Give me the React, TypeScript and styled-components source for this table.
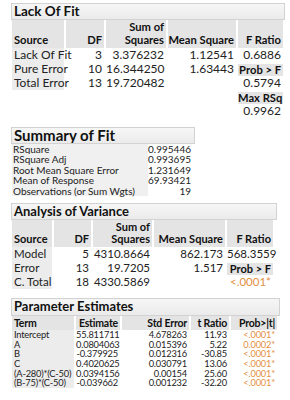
import * as React from 'react';
import styled, { createGlobalStyle } from 'styled-components';

type Kind = 'label' | 'num' | 'sub' | 'p' | 'blank';
type Cell = { t: string, k: Kind };

const L = (t: string): Cell => ({ t, k: 'label' });
const N = (t: string): Cell => ({ t, k: 'num' });
const S = (t: string): Cell => ({ t, k: 'sub' });
const P = (t: string): Cell => ({ t, k: 'p' });
const B: Cell = { t: '', k: 'blank' };

const lackOfFit = {
  heads: ['Source', 'DF', 'Sum of\nSquares', 'Mean Square', 'F Ratio'],
  rows: [
    [L('Lack Of Fit'), N('3'), N('3.376232'), N('1.12541'), N('0.6886')],
    [L('Pure Error'), N('10'), N('16.344250'), N('1.63443'), S('Prob > F')],
    [L('Total Error'), N('13'), N('19.720482'), B, N('0.5794')],
    [B, B, B, B, S('Max RSq')],
    [B, B, B, B, N('0.9962')],
  ],
};

const anova = {
  heads: ['Source', 'DF', 'Sum of\nSquares', 'Mean Square', 'F Ratio'],
  rows: [
    [L('Model'), N('5'), N('4310.8664'), N('862.173'), N('568.3559')],
    [L('Error'), N('13'), N('19.7205'), N('1.517'), S('Prob > F')],
    [L('C. Total'), N('18'), N('4330.5869'), B, P('<.0001*')],
  ],
};

const estimates = {
  heads: ['Term', 'Estimate', 'Std Error', 't Ratio', 'Prob>|t|'],
  rows: [
    [L('Intercept'), N('55.811711'), N('4.678263'), N('11.93'), P('<.0001*')],
    [L('A'), N('0.0804063'), N('0.015396'), N('5.22'), P('0.0002*')],
    [L('B'), N('-0.379925'), N('0.012316'), N('-30.85'), P('<.0001*')],
    [L('C'), N('0.4020625'), N('0.030791'), N('13.06'), P('<.0001*')],
    [L('(A-280)*(C-50)'), N('0.0394156'), N('0.00154'), N('25.60'), P('<.0001*')],
    [L('(B-75)*(C-50)'), N('-0.039662'), N('0.001232'), N('-32.20'), P('<.0001*')],
  ],
};

const summary = [
  ['RSquare', '0.995446'],
  ['RSquare Adj', '0.993695'],
  ['Root Mean Square Error', '1.231649'],
  ['Mean of Response', '69.93421'],
  ['Observations (or Sum Wgts)', '19'],
];

const GlobalStyle = createGlobalStyle`
  body {
    margin: 0;
    background: #fff;
    font-family: Lato, "Open Sans", sans-serif;
    color: #222;
  }
`;

const Page = styled.div`
  display: flex;
  flex-direction: column;
  align-items: flex-start;
  box-sizing: border-box;
  width: 290px;
  height: 400px;
  overflow: hidden;
  padding: 3px 0 0 11px;
`;

const Section = styled.section<{ $gap: number }>`
  display: flex;
  flex-direction: column;
  align-items: flex-start;
  margin-bottom: ${p => p.$gap}px;
`;

const TitleBar = styled.div<{ $width: number, $height: number, $size: number }>`
  box-sizing: border-box;
  display: flex;
  align-items: center;
  width: ${p => p.$width}px;
  height: ${p => p.$height}px;
  border: 1px solid #d2d2d2;
  background: linear-gradient(#f6f6f6, #ebebeb);
  padding-left: 2px;
  font-size: ${p => p.$size}px;
  line-height: 1;
  font-weight: 700;
  color: #111;
  white-space: nowrap;
  overflow: hidden;
`;

const Grid = styled.div<{ $cols: string, $head: number, $row: number, $size: number, $track?: number }>`
  display: grid;
  grid-template-columns: ${p => p.$cols};
  grid-template-rows: ${p => p.$head}px;
  grid-auto-rows: ${p => p.$row}px;
  column-gap: 2px;
  margin-left: 1px;
  font-size: ${p => p.$size}px;
  line-height: ${p => Math.floor(p.$row * 2) / 2 - 0.2}px;
  letter-spacing: ${p => p.$track ?? 0}px;
  white-space: nowrap;
`;

const HeadCell = styled.div<{ $left?: boolean, $size: number }>`
  display: flex;
  align-items: flex-end;
  justify-content: ${p => (p.$left ? 'flex-start' : 'flex-end')};
  background: #e4e4e4;
  padding: 0 2px 1px;
  font-size: ${p => p.$size}px;
  font-weight: 700;
  color: #111;
  text-align: ${p => (p.$left ? 'left' : 'right')};
  white-space: pre;
  line-height: 1.15;
`;

const LabelCell = styled.div`
  background: #ececec;
  padding-left: 2px;
`;

const NumCell = styled.div<{ $tone?: 'p' }>`
  text-align: right;
  padding-right: 2px;
  color: ${p => (p.$tone === 'p' ? '#e3903f' : '#222')};
`;

const SubHead = styled.div<{ $size: number }>`
  align-self: end;
  background: #e4e4e4;
  padding-right: 2px;
  font-size: ${p => p.$size}px;
  font-weight: 700;
  color: #111;
  text-align: right;
  line-height: 12px;
`;

const SummaryGrid = styled.div`
  display: grid;
  grid-template-columns: 136px 43px;
  grid-auto-rows: 10.4px;
  margin-left: 1px;
  font-size: 10px;
  line-height: 10px;
  white-space: nowrap;
`;

const SummaryLabel = styled.div`
  background: #f0f0f0;
  padding-left: 1px;
`;

const SummaryValue = styled.div`
  text-align: right;
`;

function renderCell(cell: Cell, key: number, headSize: number) {
  switch (cell.k) {
    case 'label':
      return <LabelCell key={key}>{cell.t}</LabelCell>;
    case 'sub':
      return <SubHead key={key} $size={headSize}>{cell.t}</SubHead>;
    case 'p':
      return <NumCell key={key} $tone="p">{cell.t}</NumCell>;
    case 'num':
      return <NumCell key={key}>{cell.t}</NumCell>;
    default:
      return <div key={key} />;
  }
}

function Table(props: {
  data: { heads: string[], rows: Cell[][] },
  cols: string,
  head: number,
  row: number,
  size: number,
  headSize: number,
  track?: number,
}) {
  const { data, headSize } = props;
  return (
    <Grid
      $cols={props.cols}
      $head={props.head}
      $row={props.row}
      $size={props.size}
      $track={props.track}
    >
      {data.heads.map((h, i) => (
        <HeadCell key={'h' + i} $left={i === 0} $size={headSize}>{h}</HeadCell>
      ))}
      {data.rows.map((r, ri) => (
        <React.Fragment key={ri}>
          {r.map((c, ci) => renderCell(c, ci, headSize))}
        </React.Fragment>
      ))}
    </Grid>
  );
}

export default function App() {
  return (
    <Page>
      <GlobalStyle />
      <Section $gap={9}>
        <TitleBar $width={274} $height={17} $size={13.5}>Lack Of Fit</TitleBar>
        <Table
          data={lackOfFit}
          cols="52px 38px 60px 68px 45px"
          head={28}
          row={14}
          size={12}
          headSize={11.2}
        />
      </Section>

      <Section $gap={7}>
        <TitleBar $width={184} $height={17} $size={15}>Summary of Fit</TitleBar>
        <SummaryGrid>
          {summary.map(([k, v]) => (
            <React.Fragment key={k}>
              <SummaryLabel>{k}</SummaryLabel>
              <SummaryValue>{v}</SummaryValue>
            </React.Fragment>
          ))}
        </SummaryGrid>
      </Section>

      <Section $gap={9}>
        <TitleBar $width={266} $height={17} $size={13}>Analysis of Variance</TitleBar>
        <Table
          data={anova}
          cols="40px 37px 59px 71px 46px"
          head={27}
          row={14}
          size={11.5}
          headSize={11}
        />
      </Section>

      <Section $gap={0}>
        <TitleBar $width={269} $height={18} $size={13}>Parameter Estimates</TitleBar>
        <Table
          data={estimates}
          cols="62px 44px 67px 38px 46px"
          head={14}
          row={9.7}
          size={9.3}
          headSize={10.5}
          track={-0.2}
        />
      </Section>
    </Page>
  );
}
